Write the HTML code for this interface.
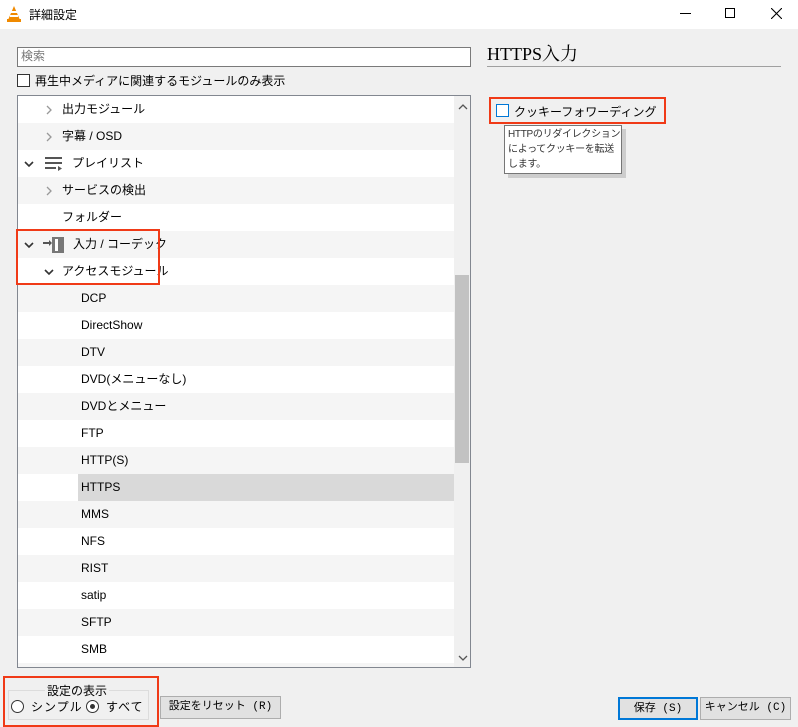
<!DOCTYPE html><html><head><meta charset="utf-8"><style>
*{box-sizing:border-box;margin:0;padding:0}
body{width:798px;height:727px;background:#f0f0f0;font-family:"Liberation Sans","Noto Sans CJK JP",sans-serif;font-size:12px;color:#000;position:relative;overflow:hidden}
.a{position:absolute}
.title{left:0;top:0;width:798px;height:29px;background:#fff}
.row{position:absolute;left:0;width:436px;height:27px;line-height:27px;font-size:12px}
.g{background:#f5f5f5}
.red{position:absolute;border:2px solid #f03a17}
.btn{position:absolute;background:#e1e1e1;border:1px solid #adadad;font-size:11px;text-align:center;line-height:20px;font-family:"Liberation Mono","Noto Sans CJK JP",monospace}
</style></head><body>
<div class="a title">
<svg class="a" style="left:6px;top:6px" width="16" height="16"><polygon points="8,0 14,14 2,14" fill="#f08a00"/><rect x="1" y="13" width="14" height="3" fill="#f08a00"/><rect x="5" y="5" width="6" height="2" fill="#fff"/><rect x="4" y="9" width="8" height="2" fill="#fff"/></svg>
<div class="a" style="left:29px;top:6px;font-size:12px">詳細設定</div>
<div class="a" style="left:680px;top:13px;width:11px;height:1px;background:#000"></div>
<div class="a" style="left:725px;top:8px;width:10px;height:10px;border:1px solid #000"></div>
<svg class="a" style="left:771px;top:8px" width="11" height="11"><path d="M0 0L11 11M11 0L0 11" stroke="#000" stroke-width="1.1"/></svg>
</div>
<div class="a" style="left:17px;top:47px;width:454px;height:20px;background:#fff;border:1px solid #7a7a7a;color:#777;font-size:12px;padding-left:3px;line-height:17px">検索</div>
<div class="a" style="left:17px;top:74px;width:13px;height:13px;border:1px solid #333;background:#fff"></div>
<div class="a" style="left:35px;top:72px;font-size:12px">再生中メディアに関連するモジュールのみ表示</div>
<svg width="0" height="0" style="position:absolute"><defs>
<path id="r" d="M0 0L4 4L0 8" fill="none" stroke="#999" stroke-width="1.3"/>
<path id="d" d="M0 0L4 4L8 0" fill="none" stroke="#333" stroke-width="1.6"/>
</defs></svg>
<div class="a" style="left:17px;top:95px;width:454px;height:573px;background:#fff;border:1px solid #828790;overflow:hidden">
<div class="a" style="left:0;top:0;width:436px;height:571px">
<div class="row" style="top:0"><svg class="a" style="left:28px;top:9px" width="6" height="10"><use href="#r" x="1" y="1"/></svg><span class="a" style="left:44px">出力モジュール</span></div>
<div class="row g" style="top:27px"><svg class="a" style="left:28px;top:9px" width="6" height="10"><use href="#r" x="1" y="1"/></svg><span class="a" style="left:44px">字幕 / OSD</span></div>
<div class="row" style="top:54px"><svg class="a" style="left:6px;top:11px" width="10" height="7"><use href="#d" x="1" y="1"/></svg><svg class="a" style="left:27px;top:7px" width="18" height="14"><rect x="0" y="0" width="17" height="2" fill="#555"/><rect x="0" y="5" width="17" height="2" fill="#555"/><rect x="0" y="10" width="11" height="2" fill="#555"/><polygon points="13,9 17,11.5 13,14" fill="#555"/></svg><span class="a" style="left:54px">プレイリスト</span></div>
<div class="row g" style="top:81px"><svg class="a" style="left:28px;top:9px" width="6" height="10"><use href="#r" x="1" y="1"/></svg><span class="a" style="left:44px">サービスの検出</span></div>
<div class="row" style="top:108px"><span class="a" style="left:44px">フォルダー</span></div>
<div class="row g" style="top:135px"><svg class="a" style="left:6px;top:11px" width="10" height="7"><use href="#d" x="1" y="1"/></svg><svg class="a" style="left:25px;top:6px" width="22" height="16"><rect x="0" y="5" width="6" height="2" fill="#555"/><polygon points="6,3 9,6 6,9" fill="#555"/><rect x="9" y="0" width="12" height="16" fill="#777"/><rect x="12" y="2" width="3" height="12" fill="#fff"/></svg><span class="a" style="left:55px">入力 / コーデック</span></div>
<div class="row" style="top:162px"><svg class="a" style="left:26px;top:11px" width="10" height="7"><use href="#d" x="1" y="1"/></svg><span class="a" style="left:44px">アクセスモジュール</span></div>
<div class="row g" style="top:189px"><span class="a" style="left:63px">DCP</span></div>
<div class="row" style="top:216px"><span class="a" style="left:63px">DirectShow</span></div>
<div class="row g" style="top:243px"><span class="a" style="left:63px">DTV</span></div>
<div class="row" style="top:270px"><span class="a" style="left:63px">DVD(メニューなし)</span></div>
<div class="row g" style="top:297px"><span class="a" style="left:63px">DVDとメニュー</span></div>
<div class="row" style="top:324px"><span class="a" style="left:63px">FTP</span></div>
<div class="row g" style="top:351px"><span class="a" style="left:63px">HTTP(S)</span></div>
<div class="row" style="top:378px"><div class="a" style="left:60px;top:0;width:376px;height:27px;background:#d9d9d9"></div><span class="a" style="left:63px">HTTPS</span></div>
<div class="row g" style="top:405px"><span class="a" style="left:63px">MMS</span></div>
<div class="row" style="top:432px"><span class="a" style="left:63px">NFS</span></div>
<div class="row g" style="top:459px"><span class="a" style="left:63px">RIST</span></div>
<div class="row" style="top:486px"><span class="a" style="left:63px">satip</span></div>
<div class="row g" style="top:513px"><span class="a" style="left:63px">SFTP</span></div>
<div class="row" style="top:540px"><span class="a" style="left:63px">SMB</span></div>
<div class="row g" style="top:567px"></div>
</div>
<div class="a" style="left:436px;top:0;width:16px;height:571px;background:#f0f0f0"></div>
<div class="a" style="left:437px;top:179px;width:14px;height:188px;background:#c2c2c2"></div>
<svg class="a" style="left:440px;top:8px" width="10" height="7"><path d="M1 5L5 1L9 5" fill="none" stroke="#555" stroke-width="1.3"/></svg>
<svg class="a" style="left:440px;top:559px" width="10" height="7"><path d="M1 1L5 5L9 1" fill="none" stroke="#555" stroke-width="1.3"/></svg>
</div>
<div class="red" style="left:16px;top:229px;width:144px;height:56px"></div>
<div class="a" style="left:487px;top:40px;font-family:'Liberation Serif','Noto Serif CJK SC',serif;font-size:18px">HTTPS入力</div>
<div class="a" style="left:487px;top:66px;width:294px;height:1px;background:#a0a0a0"></div>
<div class="red" style="left:489px;top:97px;width:177px;height:27px"></div>
<div class="a" style="left:496px;top:104px;width:13px;height:13px;border:1px solid #0078d7;background:#fff"></div>
<div class="a" style="left:514px;top:103px;font-size:12px;white-space:nowrap">クッキーフォワーディング</div>
<div class="a" style="left:508px;top:129px;width:118px;height:49px;background:#aaa;opacity:.5"></div>
<div class="a" style="left:504px;top:125px;width:118px;height:49px;background:#fff;border:1px solid #767676;font-size:10px;line-height:15px;padding:1px 3px;color:#333;white-space:nowrap;letter-spacing:-0.3px;overflow:hidden">HTTPのリダイレクション<br>によってクッキーを転送<br>します。</div>
<div class="red" style="left:3px;top:676px;width:156px;height:51px"></div>
<div class="a" style="left:8px;top:690px;width:141px;height:30px;border:1px solid #dcdcdc"></div>
<div class="a" style="left:45px;top:682px;background:#f0f0f0;padding:0 2px;font-size:12px">設定の表示</div>
<div class="a" style="left:11px;top:700px;width:13px;height:13px;border:1px solid #333;border-radius:50%;background:#fff"></div>
<div class="a" style="left:31px;top:698px;font-size:12px;letter-spacing:1px">シンプル</div>
<div class="a" style="left:86px;top:700px;width:13px;height:13px;border:1px solid #333;border-radius:50%;background:#fff"></div>
<div class="a" style="left:90px;top:704px;width:5px;height:5px;border-radius:50%;background:#333"></div>
<div class="a" style="left:106px;top:698px;font-size:12px;letter-spacing:1px">すべて</div>
<div class="btn" style="left:160px;top:696px;width:121px;height:23px">設定をリセット (R)</div>
<div class="btn" style="left:618px;top:697px;width:80px;height:23px;border:2px solid #0078d7">保存 (S)</div>
<div class="btn" style="left:700px;top:697px;width:91px;height:23px">キャンセル (C)</div>
</body></html>
